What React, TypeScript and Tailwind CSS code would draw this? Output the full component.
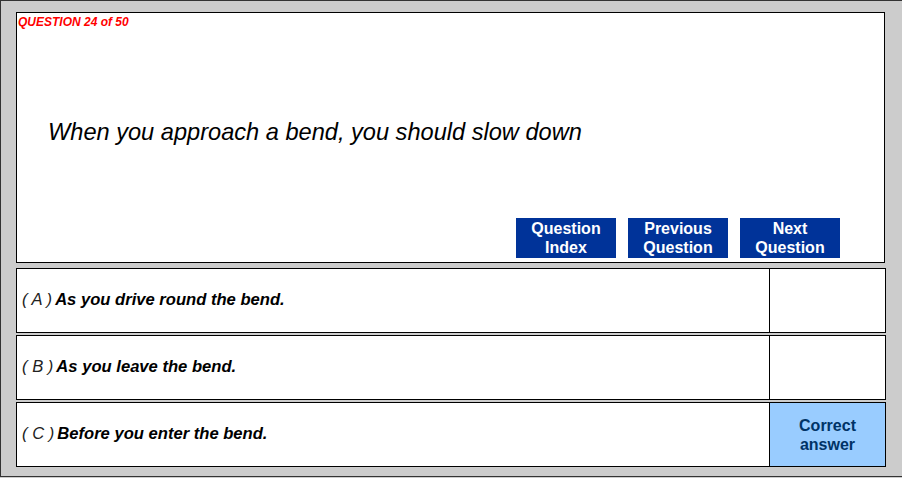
import React from "react";

const font = { fontFamily: '"Liberation Sans", Arial, sans-serif' };

function Btn({ l1, l2 }: { l1: string; l2: string }) {
  return (
    <div className="w-[100px] h-[40px] bg-[#003399] text-white font-bold text-[16px] leading-[19px] flex flex-col items-center justify-center text-center">
      <span>{l1}</span>
      <span>{l2}</span>
    </div>
  );
}

function Row({ letter, text, correct }: { letter: string; text: string; correct?: boolean }) {
  return (
    <div className="w-[870px] h-[65px] border border-black bg-white flex">
      <div className="flex-1 flex items-center pl-[5px] italic text-[16.6px] text-black">
        <span className="font-normal text-[#222] mr-[3px]">( {letter} )</span>
        <span className="font-bold">{text}</span>
      </div>
      <div
        className={
          "w-[116px] border-l border-black flex flex-col items-center justify-center font-bold text-[16px] leading-[19px] text-[#003366] " +
          (correct ? "bg-[#99ccff]" : "bg-white")
        }
      >
        {correct ? (
          <>
            <span>Correct</span>
            <span>answer</span>
          </>
        ) : null}
      </div>
    </div>
  );
}

export default function App() {
  return (
    <div className="w-[902px] h-[478px] bg-[#cccccc] overflow-hidden" style={font}>
      <div className="w-[910px] h-[477px] border-t border-l border-b border-[#333333] pl-[15px] pt-[11px] flex flex-col">
        <div className="w-[869px] h-[251px] border border-black bg-white flex flex-col">
          <div className="pt-[2px] pl-[1px] h-[16px] text-[12px] leading-[14px] font-bold italic text-[#ff0000]">
            QUESTION 24 of 50
          </div>
          <div className="mt-[89px] pl-[31px] text-[23.6px] leading-[28px] italic text-black">
            When you approach a bend, you should slow down
          </div>
          <div className="mt-[72px] flex justify-end gap-[12px] pr-[44px]">
            <Btn l1="Question" l2="Index" />
            <Btn l1="Previous" l2="Question" />
            <Btn l1="Next" l2="Question" />
          </div>
        </div>
        <div className="mt-[5px] flex flex-col gap-[2px]">
          <Row letter="A" text="As you drive round the bend." />
          <Row letter="B" text="As you leave the bend." />
          <Row letter="C" text="Before you enter the bend." correct />
        </div>
      </div>
    </div>
  );
}
